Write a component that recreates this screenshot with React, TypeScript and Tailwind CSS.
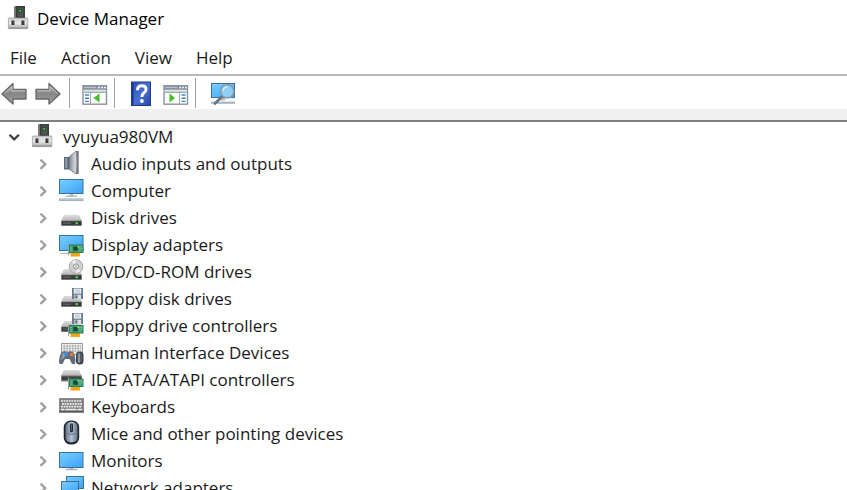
import { useState, type ReactNode } from "react";

function Drawing({ children }: { children: ReactNode }) {
  return (
    <svg
      aria-hidden="true"
      className="h-[27px] w-[27px] shrink-0"
      viewBox="0 0 27 27"
    >
      {children}
    </svg>
  );
}

// Gradients shared by all of the device drawings
function IconDefs() {
  return (
    <svg aria-hidden="true" className="absolute h-0 w-0">
      <defs>
        <linearGradient id="screen" x1="0" x2="1" y1="0" y2="1">
          <stop offset="0" stopColor="#77cdfd" />
          <stop offset="0.5" stopColor="#5bb9fb" />
          <stop offset="1" stopColor="#3da2f5" />
        </linearGradient>
        <linearGradient id="lid" x1="0" x2="0" y1="0" y2="1">
          <stop offset="0" stopColor="#dedede" />
          <stop offset="1" stopColor="#b4b4b4" />
        </linearGradient>
        <linearGradient id="case" x1="0" x2="0" y1="0" y2="1">
          <stop offset="0" stopColor="#d0d0d0" />
          <stop offset="0.5" stopColor="#e8e8e8" />
          <stop offset="1" stopColor="#a8a8a8" />
        </linearGradient>
        <linearGradient id="cone" x1="0" x2="1" y1="0" y2="0">
          <stop offset="0" stopColor="#7f868c" />
          <stop offset="0.65" stopColor="#d3d8dc" />
          <stop offset="1" stopColor="#8b9196" />
        </linearGradient>
        <linearGradient id="arrow" x1="0" x2="0" y1="0" y2="1">
          <stop offset="0" stopColor="#bdbdbd" />
          <stop offset="0.5" stopColor="#858585" />
          <stop offset="1" stopColor="#a8a8a8" />
        </linearGradient>
        <linearGradient id="shell" x1="0" x2="1" y1="0" y2="0">
          <stop offset="0" stopColor="#66758a" />
          <stop offset="0.5" stopColor="#b3c1d1" />
          <stop offset="1" stopColor="#66758a" />
        </linearGradient>
        <linearGradient id="book" x1="0" x2="1" y1="0" y2="1">
          <stop offset="0" stopColor="#2e50b4" />
          <stop offset="0.5" stopColor="#4a70d4" />
          <stop offset="1" stopColor="#2746a4" />
        </linearGradient>
      </defs>
    </svg>
  );
}

function Screen({ x, y, w, h }: { x: number; y: number; w: number; h: number }) {
  return (
    <g>
      <rect fill="#3b7198" height={h} width={w} x={x} y={y} />
      <rect
        fill="url(#screen)"
        height={h - 2}
        width={w - 2}
        x={x + 1}
        y={y + 1}
      />
    </g>
  );
}

function Drive({ y }: { y: number }) {
  return (
    <g>
      <path d={`M6 ${y}H21L24 ${y + 6}H3Z`} fill="url(#lid)" />
      <rect fill="#8b8b8b" height="5.5" rx="0.8" width="21" x="3" y={y + 5.5} />
      <rect fill="#383838" height="4" width="19.4" x="3.8" y={y + 6.2} />
      <rect fill="#606060" height="1.5" width="8" x="5" y={y + 7.4} />
      <rect fill="#3fe53f" height="2" width="2.4" x="17.5" y={y + 7.2} />
    </g>
  );
}

function Floppy({ y }: { y: number }) {
  return (
    <g>
      <path d={`M14 ${y}H25V${y + 11}H14Z`} fill="#687c90" />
      <rect fill="#f1f3f4" height="5" width="7.4" x="15.8" y={y + 0.6} />
      <path d={`M17 ${y + 2.2}H22M17 ${y + 4}H22`} stroke="#b7bec4" />
      <rect fill="#dce1e5" height="4.2" width="6.6" x="16.4" y={y + 6.8} />
      <rect fill="#53616e" height="3" width="2" x="17.4" y={y + 7.4} />
    </g>
  );
}

function Card({ y }: { y: number }) {
  return (
    <g>
      <path d={`M10.5 ${y - 1}V${y + 11}`} stroke="#a3a3a3" />
      <path d={`M12.5 ${y + 8}H22V${y + 12}H12.5Z`} fill="#f5a81c" />
      <path
        d={`M15.5 ${y + 9}V${y + 12}M18.5 ${y + 9}V${y + 12}`}
        stroke="#d98a12"
        strokeWidth="0.6"
      />
      <rect fill="#27805a" height="8.5" width="14.5" x="11" y={y} />
      <rect fill="#3d9d73" height="6.5" width="12.6" x="12" y={y + 1} />
      <rect fill="#184638" height="4.2" width="4.4" x="15.3" y={y + 2} />
      <path
        d={`M13 ${y + 2}V${y + 7}M22 ${y + 2}V${y + 7}M23.8 ${y + 1.5}V${y + 5}`}
        stroke="#a8d4a8"
        strokeDasharray="1 1"
      />
      <rect fill="#86f04c" height="1.6" width="1.6" x="19.5" y={y + 1.4} />
    </g>
  );
}

function MachineIcon() {
  return (
    <Drawing>
      <path d="M8 2L10 1H19V13H8Z" fill="#3b3d3d" />
      <path d="M8 2L10 1V13H8Z" fill="#777" />
      <rect fill="#505353" height="9" width="6" x="11.5" y="2.5" />
      <rect fill="#184f19" height="3.4" width="3.4" x="12.6" y="4" />
      <rect fill="#57ea4b" height="1.6" width="1.6" x="13.5" y="5" />
      <rect
        fill="url(#case)"
        height="10.6"
        rx="0.6"
        stroke="#969696"
        strokeWidth="0.7"
        width="19.4"
        x="2.4"
        y="13"
      />
      <rect fill="#979797" height="1.4" width="19.4" x="2.4" y="22.4" />
      <path d="M5.5 15.5H8.5V20H5.5ZM15.5 15.5H18.5V20H15.5Z" fill="#333" />
      <path d="M8.3 16V19.5M18.3 16V19.5" stroke="#999" />
    </Drawing>
  );
}

function SpeakerIcon() {
  return (
    <Drawing>
      <path d="M11 7L18 1H20.5V24H18L11 19Z" fill="url(#cone)" />
      <path d="M18 1H20.5V24H18Q19.6 12.5 18 1Z" fill="#737a80" />
      <path d="M11 7L18 1M11 19L18 24" stroke="#858c92" />
      <rect fill="#5b6a77" height="12.5" width="5.5" x="6" y="7" />
      <rect fill="#8799a8" height="10" width="2.4" x="7" y="8" />
    </Drawing>
  );
}

function ComputerIcon() {
  return (
    <Drawing>
      <Screen h={15} w={24.5} x={1} y={2} />
      <path d="M11.5 17H15.5V18.4H19V20H8V18.4H11.5Z" fill="#b2bdc5" />
      <rect fill="#a0b1be" height="2.6" width="24.5" x="1" y="21.4" />
      <path d="M2 22.2H25" stroke="#d0dae1" strokeWidth="0.7" />
    </Drawing>
  );
}

function DiskIcon() {
  return (
    <Drawing>
      <Drive y={11} />
    </Drawing>
  );
}

function DisplayIcon() {
  return (
    <Drawing>
      <Screen h={16} w={24.5} x={1} y={4} />
      <path d="M7 21.5H12V23H2V22H7Z" fill="#b2bdc5" />
      <Card y={13.5} />
    </Drawing>
  );
}

function DiscDriveIcon() {
  return (
    <Drawing>
      <Drive y={11} />
      <circle cx="18" cy="8.5" fill="#d0d0d0" r="6.8" stroke="#a6a6a6" />
      <path
        d="M18 8.5L13.5 3.7A6.5 6.5 0 0 1 18 2ZM18 8.5L22.5 13A6.5 6.5 0 0 1 18 15Z"
        fill="#ececec"
      />
      <circle cx="18" cy="8.5" fill="#eee" r="2.6" stroke="#8f8f8f" />
      <circle cx="18" cy="8.5" fill="#999" r="0.9" />
    </Drawing>
  );
}

function FloppyDriveIcon() {
  return (
    <Drawing>
      <Drive y={11} />
      <Floppy y={3} />
    </Drawing>
  );
}

function FloppyControllerIcon() {
  return (
    <Drawing>
      <Drive y={9} />
      <Floppy y={1} />
      <Card y={13} />
    </Drawing>
  );
}

function HidIcon() {
  return (
    <Drawing>
      <rect fill="#e9e9e9" height="11" stroke="#9b9b9b" width="21" x="3.5" y="4.5" />
      <path
        d="M5.5 7H23M5.5 9.5H23M5.5 12H23"
        stroke="#9b9b9b"
        strokeDasharray="1.6 1.2"
        strokeWidth="1.3"
      />
      <path
        d="M5 12.5Q8 11.5 9.5 13.5Q11.5 11.5 14 12.5Q16.5 13 17.5 21L17 25H14L11.5 20H7L4.5 25H1.5L1 22Q2 13 5 12.5Z"
        fill="#626c77"
      />
      <path d="M4.5 14Q7 13 7.5 15.5L6.5 18L3 21.5Z" fill="#929da8" />
      <circle cx="8" cy="15" fill="#3b93e6" r="1.9" />
      <circle cx="13.5" cy="15.5" fill="#f07c2a" r="1.8" />
      <rect fill="#3f454c" height="13" rx="3.5" width="7.5" x="18" y="12.5" />
      <rect fill="#8b97a5" height="10" rx="1.2" width="2.2" x="19.8" y="14" />
      <path d="M23 14V23" stroke="#69747f" />
    </Drawing>
  );
}

function IdeIcon() {
  return (
    <Drawing>
      <path d="M6 4H21L24 10H3Z" fill="url(#lid)" />
      <rect fill="#777" height="6" rx="0.8" width="21" x="3" y="9.5" />
      <rect fill="#404040" height="3.5" width="19" x="4" y="10.5" />
      <Card y={12.5} />
    </Drawing>
  );
}

function KeyboardIcon() {
  return (
    <Drawing>
      <rect fill="#8e8e8e" height="14.5" width="25" x="1" y="5" />
      <rect fill="#5c5c5c" height="1.6" width="25" x="1" y="18" />
      <rect fill="#7d7d7d" height="12" width="23" x="2" y="6" />
      <path
        d="M3 8H24M4 10.8H24M3 13.6H24"
        stroke="#f0f0f0"
        strokeDasharray="1.9 0.7"
        strokeWidth="1.7"
      />
      <path d="M3 16.4H6.5M7.5 16.4H18.5M19.5 16.4H24" stroke="#f0f0f0" strokeWidth="1.5" />
    </Drawing>
  );
}

function MouseIcon() {
  return (
    <Drawing>
      <rect fill="#22272d" height="24" rx="6.8" width="15.5" x="5.7" y="0.4" />
      <rect fill="url(#shell)" height="21" rx="5.2" width="12" x="7.5" y="1.8" />
      <path d="M7.5 13Q13.5 16 19.5 13" fill="none" stroke="#66758a" />
      <rect fill="#252b33" height="9" rx="1.4" width="3" x="12" y="3.4" />
      <path d="M13.5 4.5V10.5" stroke="#65717e" strokeWidth="0.9" />
      <path d="M9.5 21Q13.5 24 17.5 21V23.4H9.5Z" fill="#22272d" />
    </Drawing>
  );
}

function MonitorIcon() {
  return (
    <Drawing>
      <Screen h={16} w={24.5} x={1} y={5} />
      <path d="M11.5 21H15.5V21.8H19.5V23.2H8V21.8H11.5Z" fill="#a9b4bc" />
    </Drawing>
  );
}

function NetworkIcon() {
  return (
    <Drawing>
      <Screen h={13} w={18} x={8} y={2} />
      <Screen h={13} w={18} x={3} y={7} />
      <rect fill="#a9b4bc" height="2" width="10" x="7" y="22" />
    </Drawing>
  );
}

function ArrowIcon({ forward = false }: { forward?: boolean }) {
  return (
    <svg
      aria-hidden="true"
      className={forward ? "h-6 w-[26px] -scale-x-100" : "h-6 w-[26px]"}
      viewBox="0 -1 26 24"
    >
      <path
        d="M1 12L12 1.5V7.5H25V17H12V22Z"
        fill="url(#arrow)"
        stroke="#666"
        strokeLinejoin="round"
        strokeWidth="1.3"
      />
      <path d="M3.5 11.5L11 4.5V8.8H23.8" fill="none" stroke="#c5c5c5" />
    </svg>
  );
}

function PaneIcon({ side }: { side: "left" | "right" }) {
  return (
    <svg aria-hidden="true" className="h-6 w-[26px]" viewBox="0 -2 26 24">
      <rect fill="#fbfbfb" height="18.5" stroke="#8b949c" strokeWidth="1.4" width="23.5" x="1" y="2.7" />
      <rect fill="#8996a2" height="4.5" width="24" x="1" y="2.3" />
      <path d="M2.5 4.5H14" stroke="#b9c4cd" />
      <path d="M16 4.5H18M19 4.5H21M22 4.5H24" stroke="#e4edf3" strokeWidth="1.3" />
      <path d="M1.5 8.2H24" stroke="#d0d5d9" strokeWidth="1.6" />
      {side === "left" ? (
        <>
          <path d="M8.5 9V21M1.5 9.4H24" stroke="#9ba4ab" />
          <path d="M3 12H7M3 15.2H7M3 18.4H7" stroke="#3d86c4" strokeWidth="1.4" />
          <path d="M17.5 10.5V19.5L11.5 15Z" fill="#45bd25" />
        </>
      ) : (
        <>
          <path d="M16.5 9V21M1.5 9.4H24" stroke="#9ba4ab" />
          <path d="M18.5 12H22.5M18.5 15.2H22.5M18.5 18.4H22.5" stroke="#3d86c4" strokeWidth="1.4" />
          <path d="M6.5 10.5V19.5L12 15Z" fill="#45bd25" />
        </>
      )}
    </svg>
  );
}

function HelpIcon() {
  return (
    <svg aria-hidden="true" className="h-[26px] w-5" viewBox="0 0 20 26">
      <rect fill="#1e3a8d" height="24.5" width="20" y="1.5" />
      <rect fill="url(#book)" height="22.5" width="16.5" x="2.5" y="2.5" />
      <path
        d="M6.5 10.3Q6.5 5.8 10.8 5.8Q15 5.8 15 9.6Q15 11.6 12.6 13.2Q10.9 14.4 10.9 17"
        fill="none"
        stroke="#fff"
        strokeWidth="2.9"
      />
      <circle cx="10.9" cy="21" fill="#fff" r="1.9" />
    </svg>
  );
}

function ScanIcon() {
  return (
    <svg aria-hidden="true" className="h-6 w-[26px]" viewBox="0 -1 26 24">
      <rect fill="#a6b5c1" height="2.2" width="24" x="1" y="19.6" />
      <path d="M9 16H15V18.5H9Z" fill="#b2bdc5" />
      <Screen h={15} w={24} x={1} y={1} />
      <path d="M12.5 14L5 21.5" stroke="#68737d" strokeLinecap="round" strokeWidth="2.6" />
      <circle cx="17.3" cy="9.3" fill="#8fd0f7" r="6.6" stroke="#8b99a6" strokeWidth="1.6" />
      <path d="M13 9Q13.5 5 17.5 4.8" fill="none" stroke="#d8effd" strokeWidth="1.5" />
    </svg>
  );
}

const menus = ["File", "Action", "View", "Help"];

const devices = [
  { name: "Audio inputs and outputs", Icon: SpeakerIcon },
  { name: "Computer", Icon: ComputerIcon },
  { name: "Disk drives", Icon: DiskIcon },
  { name: "Display adapters", Icon: DisplayIcon },
  { name: "DVD/CD-ROM drives", Icon: DiscDriveIcon },
  { name: "Floppy disk drives", Icon: FloppyDriveIcon },
  { name: "Floppy drive controllers", Icon: FloppyControllerIcon },
  { name: "Human Interface Devices", Icon: HidIcon },
  { name: "IDE ATA/ATAPI controllers", Icon: IdeIcon },
  { name: "Keyboards", Icon: KeyboardIcon },
  { name: "Mice and other pointing devices", Icon: MouseIcon },
  { name: "Monitors", Icon: MonitorIcon },
  { name: "Network adapters", Icon: NetworkIcon },
];

function Expander({
  label,
  open = false,
  onClick,
}: {
  label: string;
  open?: boolean;
  onClick?: () => void;
}) {
  return (
    <button
      aria-expanded={open}
      aria-label={label}
      className="flex w-3.5 shrink-0 justify-center"
      onClick={onClick}
      type="button"
    >
      <svg aria-hidden="true" className="h-3.5 w-3.5" fill="none" viewBox="0 0 14 14">
        {open ? (
          <path d="M1.5 4.8L6.2 9.4L10.9 4.8" stroke="#404040" strokeWidth="2.3" />
        ) : (
          <path d="M4.5 2.6L9.3 7.2L4.5 11.8" stroke="#a0a0a0" strokeWidth="2.3" />
        )}
      </svg>
    </button>
  );
}

function ToolButton({ label, children }: { label: string; children: ReactNode }) {
  return (
    <button aria-label={label} className="shrink-0" title={label} type="button">
      {children}
    </button>
  );
}

function Divider() {
  return <div className="h-[30px] w-px shrink-0 bg-[#a0a0a0]" />;
}

export default function App() {
  const [open, setOpen] = useState(true);

  return (
    <div className="flex h-screen flex-col overflow-hidden bg-white font-[Open_Sans,sans-serif] text-[17px] leading-[27px] text-[#1a1a1a]">
      <IconDefs />
      <header className="mb-1.5 flex h-9 shrink-0 items-center gap-1 pl-1.5">
        <MachineIcon />
        <h1 className="text-black">Device Manager</h1>
      </header>

      <nav className="flex h-8 shrink-0 items-center gap-6 pb-px pl-2.5">
        {menus.map((menu) => (
          <button key={menu} type="button">
            {menu}
          </button>
        ))}
      </nav>

      <div className="flex h-[35px] shrink-0 items-center border-t-2 border-[#b8b8b8] pl-px">
        <div className="flex gap-2 pr-2">
          <ToolButton label="Back">
            <ArrowIcon />
          </ToolButton>
          <ToolButton label="Forward">
            <ArrowIcon forward />
          </ToolButton>
        </div>
        <Divider />
        <div className="flex pr-1.5 pl-3">
          <ToolButton label="Show or hide console tree">
            <PaneIcon side="left" />
          </ToolButton>
        </div>
        <Divider />
        <div className="flex items-center gap-3 pr-1.5 pl-4">
          <ToolButton label="Help">
            <HelpIcon />
          </ToolButton>
          <ToolButton label="Show or hide action pane">
            <PaneIcon side="right" />
          </ToolButton>
        </div>
        <Divider />
        <div className="flex pl-3.5">
          <ToolButton label="Scan for hardware changes">
            <ScanIcon />
          </ToolButton>
        </div>
      </div>
      <div className="h-[13px] shrink-0 border-b-2 border-[#808080] bg-[#f0f0f0]" />

      <main className="min-h-0 flex-1 overflow-hidden pt-px">
        <ul role="tree">
          <li aria-expanded={open} role="treeitem">
            <div className="flex h-[27px] items-center gap-2 pl-2">
              <Expander label="vyuyua980VM" onClick={() => setOpen(!open)} open={open} />
              <div className="flex gap-1.5">
                <MachineIcon />
                <span>vyuyua980VM</span>
              </div>
            </div>
            {open && (
              <ul role="group">
                {devices.map(({ name, Icon }) => (
                  <li
                    key={name}
                    className="flex h-[27px] items-center gap-2 pl-9"
                    role="treeitem"
                  >
                    <Expander label={name} />
                    <div className="flex gap-1.5">
                      <Icon />
                      <span className="whitespace-nowrap">{name}</span>
                    </div>
                  </li>
                ))}
              </ul>
            )}
          </li>
        </ul>
      </main>
    </div>
  );
}
